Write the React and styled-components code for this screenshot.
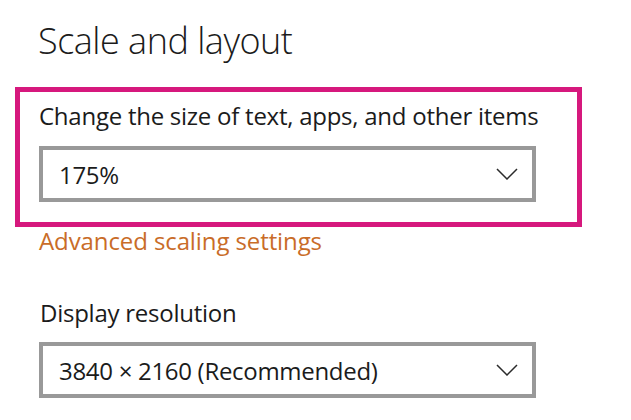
import React from "react";
import styled, { createGlobalStyle } from "styled-components";

const GlobalStyle = createGlobalStyle`
  html, body {
    margin: 0;
    padding: 0;
    background: #ffffff;
  }
  body {
    font-family: "Open Sans", "Noto Sans", sans-serif;
    color: #1b1b1b;
  }
`;

const Page = styled.div`
  width: 631px;
  height: 420px;
  overflow: hidden;
  padding: 19px 0 0 15px;
  box-sizing: border-box;
  background: #ffffff;
`;

const Title = styled.h1`
  margin: 0 0 24px 23px;
  font-size: 36px;
  line-height: 44px;
  font-weight: 300;
  letter-spacing: -0.5px;
  color: #1b1b1b;
`;

const Highlight = styled.div`
  width: 567px;
  box-sizing: border-box;
  border: 5px solid #d6187d;
  padding: 8px 0 20px 19px;
`;

const Label = styled.div`
  margin-left: ${(p) => p.$indent || 0}px;
  margin-top: ${(p) => p.$top || 0}px;
  font-size: 24px;
  line-height: ${(p) => p.$line || 30}px;
  letter-spacing: -0.25px;
  color: #1b1b1b;
  white-space: nowrap;
`;

const Select = styled.div`
  margin: 14px 0 0 ${(p) => p.$indent || 0}px;
  width: 497px;
  height: 56px;
  box-sizing: border-box;
  border: 4px solid #999999;
  display: flex;
  align-items: center;
  justify-content: space-between;
  padding: 0 14px 0 16px;
  font-size: 24px;
  letter-spacing: -0.3px;
  color: #1b1b1b;
`;

const Link = styled.a`
  display: block;
  margin-left: 24px;
  font-size: 24px;
  line-height: 28px;
  letter-spacing: -0.1px;
  color: #c96c28;
  text-decoration: none;
  cursor: pointer;
`;

const Chevron = () => (
  <svg width="22" height="12" viewBox="0 0 22 12" fill="none">
    <path d="M1 1 L11 11 L21 1" stroke="#2b2b2b" strokeWidth="1.5" />
  </svg>
);

export default function App() {
  return (
    <Page>
      <GlobalStyle />
      <Title>Scale and layout</Title>
      <Highlight>
        <Label $line={32}>Change the size of text, apps, and other items</Label>
        <Select>
          <span>175%</span>
          <Chevron />
        </Select>
      </Highlight>
      <Link>Advanced scaling settings</Link>
      <Label $indent={25} $top={43}>
        Display resolution
      </Label>
      <Select $indent={24}>
        <span>3840 × 2160 (Recommended)</span>
        <Chevron />
      </Select>
    </Page>
  );
}
